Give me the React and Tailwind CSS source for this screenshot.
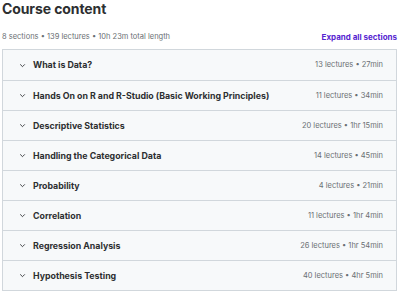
import React from 'react'

const sections = [
    { title: 'What is Data?', info: '13 lectures • 27min' },
    { title: 'Hands On on R and R-Studio (Basic Working Principles)', info: '11 lectures • 34min' },
    { title: 'Descriptive Statistics', info: '20 lectures • 1hr 15min' },
    { title: 'Handling the Categorical Data', info: '14 lectures • 45min' },
    { title: 'Probability', info: '4 lectures • 21min' },
    { title: 'Correlation', info: '11 lectures • 1hr 4min' },
    { title: 'Regression Analysis', info: '26 lectures • 1hr 54min' },
    { title: 'Hypothesis Testing', info: '40 lectures • 4hr 5min' },
]

const Chevron = () => (
    <svg width="7" height="7" viewBox="0 0 24 24" fill="none" stroke="#2d2f31" strokeWidth="3" strokeLinecap="round" strokeLinejoin="round">
        <path d="M5 9l7 7 7-7" />
    </svg>
)

const App = () => {
    return (
        <div className='w-[400px] h-[295px] bg-white overflow-hidden px-[2px] text-[#2d2f31]' style={{ fontFamily: 'Inter, "Noto Sans", sans-serif' }}>
            <h2 className='text-[14px] font-bold leading-[16px] mt-[1px] tracking-[-0.1px]'>Course content</h2>
            <div className='flex justify-between items-center mt-[13px] h-[14px]'>
                <div className='text-[7.5px] text-[#6a6f73]'>8 sections • 139 lectures • 10h 23m total length</div>
                <div className='text-[8px] font-bold text-[#5624d0] mr-[1px]'>Expand all sections</div>
            </div>
            <div className='mt-[5px] border border-[#d1d7dc] mr-[1px]'>
                {sections.map((s, i) => (
                    <div key={i} className={'h-[30px] bg-[#f7f9fa] flex items-center pl-[16px] pr-[13px] ' + (i > 0 ? 'border-t border-[#d1d7dc]' : '')}>
                        <Chevron />
                        <div className='ml-[7px] text-[8.8px] font-bold flex-1'>{s.title}</div>
                        <div className='text-[7.5px] text-[#6a6f73]'>{s.info}</div>
                    </div>
                ))}
            </div>
        </div>
    )
}

export default App
